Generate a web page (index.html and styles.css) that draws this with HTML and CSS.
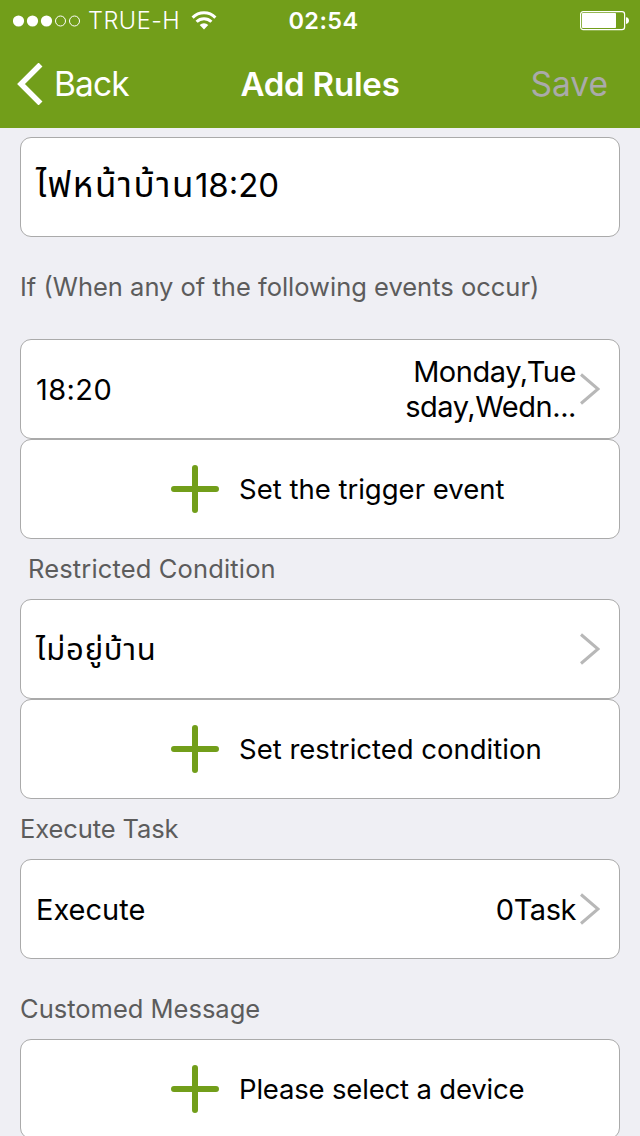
FILE: index.html
```html
<!DOCTYPE html>
<html lang="en">
<head>
    <meta charset="UTF-8">
    <meta name="viewport" content="width=device-width, initial-scale=1.0">
    <title>Add Rules</title>
    <link rel="stylesheet" href="styles.css">
</head>
<body>
    <header>
        <div class="status-bar">
            <div class="carrier">
                <svg class="signal" width="68" height="12" viewBox="0 0 68 12">
                    <circle cx="5.5" cy="6" r="5.6"/>
                    <circle cx="19.5" cy="6" r="5.6"/>
                    <circle cx="33.5" cy="6" r="5.6"/>
                    <circle class="empty" cx="47.5" cy="6" r="5"/>
                    <circle class="empty" cx="61.5" cy="6" r="5"/>
                </svg>
                <span class="carrier-name">TRUE-H</span>
                <svg class="wifi" width="26" height="19" viewBox="0 0 26 19">
                    <path class="arc" d="M1.6 6.6a16.1 16.1 0 0 1 22.8 0"/>
                    <path class="arc" d="M5.6 10.8a10.5 10.5 0 0 1 14.8 0"/>
                    <path d="M13 18.4l-4.3-4.4a6.2 6.2 0 0 1 8.6 0z"/>
                </svg>
            </div>
            <span class="clock">02:54</span>
            <svg class="battery" width="50" height="20" viewBox="0 0 50 20">
                <rect class="shell" x="0.6" y="0.6" width="44" height="18" rx="2.6"/>
                <rect x="2" y="2" width="34" height="15" rx="0.8"/>
                <path d="M46 6.2c2 .2 3 1.6 3 3.4s-1 3.2-3 3.4z"/>
            </svg>
        </div>
        <nav>
            <a class="back" href="#">
                <svg width="26" height="42" viewBox="0 0 26 42"><path d="M23.5 1.5L4 21l19.5 19.5"/></svg>
                <span>Back</span>
            </a>
            <h1>Add Rules</h1>
            <a class="save" href="#">Save</a>
        </nav>
    </header>

    <main>
        <div class="card name"><span class="thai">ไฟหน้าบ้าน</span>18:20</div>

        <h2 class="tall">If (When any of the following events occur)</h2>
        <div class="card">
            <span class="time">18:20</span>
            <span class="days">Monday,Tue<br>sday,Wedn...</span>
            <svg class="chevron" width="20" height="32" viewBox="0 0 20 32"><path d="M1 1.5L18 16 1 30.5"/></svg>
        </div>
        <div class="card add">
            <svg class="plus" width="48" height="48" viewBox="0 0 48 48"><path d="M24 3v42M3 24h42"/></svg>
            <span>Set the trigger event</span>
        </div>

        <h2 class="restricted">Restricted Condition</h2>
        <div class="card">
            <span class="condition thai">ไม่อยู่บ้าน</span>
            <svg class="chevron" width="20" height="32" viewBox="0 0 20 32"><path d="M1 1.5L18 16 1 30.5"/></svg>
        </div>
        <div class="card add">
            <svg class="plus" width="48" height="48" viewBox="0 0 48 48"><path d="M24 3v42M3 24h42"/></svg>
            <span>Set restricted condition</span>
        </div>

        <h2 class="execute">Execute Task</h2>
        <div class="card">
            <span>Execute</span>
            <span class="task">0Task</span>
            <svg class="chevron" width="20" height="32" viewBox="0 0 20 32"><path d="M1 1.5L18 16 1 30.5"/></svg>
        </div>

        <h2 class="message">Customed Message</h2>
        <div class="card add">
            <svg class="plus" width="48" height="48" viewBox="0 0 48 48"><path d="M24 3v42M3 24h42"/></svg>
            <span class="device">Please select a device</span>
        </div>
    </main>
</body>
</html>
```
FILE: styles.css
```css
* {
    box-sizing: border-box;
}
body {
    margin: 0;
    height: 1136px;
    overflow: hidden;
    background-color: #efeff4;
    color: #000;
    font-family: Inter, "Noto Sans", sans-serif;
    font-size: 29px;
}
header {
    height: 128px;
    background-color: #729e1a;
    color: white;
}
svg {
    display: block;
    flex-shrink: 0;
    fill: none;
}

/* status bar */
.status-bar {
    display: grid;
    grid-template-columns: 1fr auto 1fr;
    align-items: center;
    height: 40px;
    padding: 1px 10px 0 13px;
    font-size: 23.5px;
}
.carrier {
    display: flex;
    align-items: center;
}
.signal, .wifi, .battery {
    fill: white;
}
.signal .empty {
    fill: none;
    stroke: white;
    stroke-width: 1;
}
.carrier-name {
    margin: 0 11px 0 7px;
    font-weight: 300;
    letter-spacing: 0.5px;
}
.wifi .arc {
    fill: none;
    stroke: white;
    stroke-width: 3;
}
.clock {
    margin-left: 4px;
    font-weight: 600;
    letter-spacing: 0.4px;
}
.battery {
    justify-self: end;
}
.battery .shell {
    fill: none;
    stroke: white;
    stroke-width: 1.2;
}

/* navigation bar */
nav {
    display: grid;
    grid-template-columns: 1fr auto 1fr;
    align-items: center;
    height: 88px;
    padding: 0 17px;
}
nav a {
    color: white;
    font-size: 33.5px;
    text-decoration: none;
}
.back {
    display: flex;
    align-items: center;
    gap: 11px;
    letter-spacing: -0.9px;
}
.back path {
    stroke: white;
    stroke-width: 5.5;
}
nav h1 {
    margin: 0;
    font-size: 33px;
    font-weight: 600;
    letter-spacing: -0.2px;
}
nav .save {
    justify-self: end;
    margin-right: 15px;
    color: #aaa;
}

/* rule form */
main {
    padding: 9px 20px 0;
}
.card {
    display: flex;
    align-items: center;
    height: 100px;
    padding: 0 19px 0 15px;
    background-color: white;
    border: 1px solid #aaa;
    border-radius: 11px;
    white-space: nowrap;
}
.card.name {
    align-items: baseline;
    padding-top: 22px;
    font-size: 33px;
}
.thai {
    font-family: "Noto Sans Thai", "Noto Sans", sans-serif;
}
.name .thai {
    font-size: 35px;
    letter-spacing: 1.5px;
}
.condition {
    padding-top: 3px;
    font-size: 31px;
    letter-spacing: 0.8px;
}
h2 {
    display: flex;
    align-items: center;
    height: 60px;
    margin: 0;
    padding-bottom: 2px;
    color: #5c5c5c;
    font-size: 25.5px;
    font-weight: 400;
    white-space: nowrap;
}
h2.tall {
    height: 102px;
    padding-bottom: 4px;
}
h2.restricted {
    padding-left: 8px;
    letter-spacing: 0.15px;
}
h2.execute {
    letter-spacing: -0.1px;
}
h2.message {
    height: 80px;
    padding-top: 20px;
}
.time {
    letter-spacing: 0.4px;
}
.days, .task {
    margin-left: auto;
    text-align: right;
    line-height: 35px;
    letter-spacing: -0.45px;
}
.chevron {
    margin-left: 4px;
}
.condition + .chevron {
    margin-left: auto;
}
.chevron path {
    stroke: #b8b8b8;
    stroke-width: 3;
}
.add {
    padding-left: 150px;
    font-size: 27.5px;
}
.plus {
    margin-right: 20px;
}
.plus path {
    stroke: #729e1a;
    stroke-width: 6;
    stroke-linecap: round;
}
.device {
    letter-spacing: -0.18px;
}
```
